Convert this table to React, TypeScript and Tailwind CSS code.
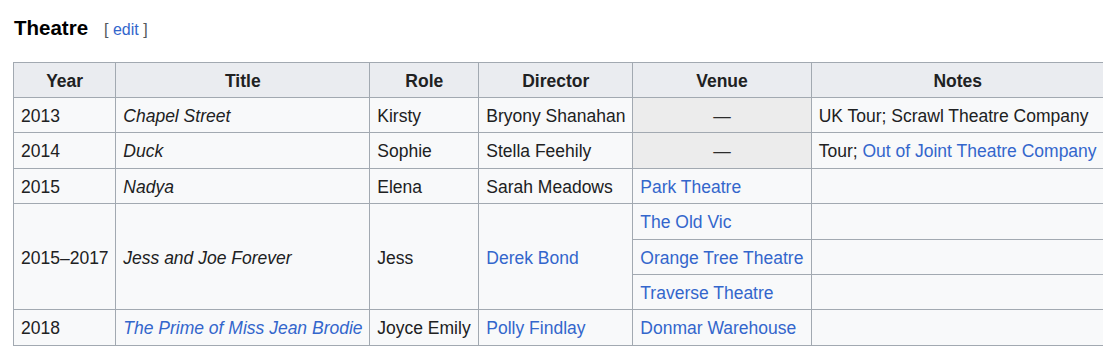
import React from 'react';

type Cell = {
  text?: React.ReactNode;
  italic?: boolean;
  link?: boolean;
  na?: boolean;
  rowSpan?: number;
};

const LINK = 'text-[#3366cc]';

const td = 'border border-[#a2a9b1] px-[7px] pt-[4px] pb-[2.4px] align-middle whitespace-nowrap';

const Row = ({ cells }: { cells: Cell[] }) => (
  <tr>
    {cells.map((c, i) =>
      c.na ? (
        <td key={i} className={`${td} bg-[#ececec] text-center text-[#2c2c2c]`}>
          —
        </td>
      ) : (
        <td key={i} rowSpan={c.rowSpan} className={`${td} text-left ${c.italic ? 'italic' : ''} ${c.link ? LINK : ''}`}>
          {c.text}
        </td>
      )
    )}
  </tr>
);

export default function App() {
  return (
    <div
      className="w-[1103px] h-[360px] overflow-hidden bg-white pl-[13px] text-[#202122]"
      style={{ fontFamily: '"Liberation Sans", Arial, sans-serif' }}
    >
      <div className="flex items-baseline pt-[14px] h-[62px]">
        <h3 className="text-[20.5px] font-bold text-black leading-[28px] ml-[1px]">Theatre</h3>
        <span className="ml-[16px] text-[16px] text-[#54595d]">
          [ <span className={LINK}>edit</span> ]
        </span>
      </div>

      <table className="table-fixed border-collapse bg-[#f8f9fa] text-[17.5px] leading-[28px] w-[1091px]">
        <colgroup>
          <col className="w-[102.3px]" />
          <col className="w-[254px]" />
          <col className="w-[109px]" />
          <col className="w-[154px]" />
          <col className="w-[178.4px]" />
          <col className="w-[293px]" />
        </colgroup>
        <thead>
          <tr className="bg-[#eaecf0]">
            {['Year', 'Title', 'Role', 'Director', 'Venue', 'Notes'].map((h) => (
              <th key={h} className="border border-[#a2a9b1] px-[7px] pt-[3.6px] pb-[2.4px] text-center font-bold">
                {h}
              </th>
            ))}
          </tr>
        </thead>
        <tbody>
          <Row
            cells={[
              { text: '2013' },
              { text: 'Chapel Street', italic: true },
              { text: 'Kirsty' },
              { text: 'Bryony Shanahan' },
              { na: true },
              { text: 'UK Tour; Scrawl Theatre Company' },
            ]}
          />
          <Row
            cells={[
              { text: '2014' },
              { text: 'Duck', italic: true },
              { text: 'Sophie' },
              { text: 'Stella Feehily' },
              { na: true },
              {
                text: (
                  <>
                    Tour; <span className={LINK}>Out of Joint Theatre Company</span>
                  </>
                ),
              },
            ]}
          />
          <Row
            cells={[
              { text: '2015' },
              { text: 'Nadya', italic: true },
              { text: 'Elena' },
              { text: 'Sarah Meadows' },
              { text: 'Park Theatre', link: true },
              { text: '' },
            ]}
          />
          <Row
            cells={[
              { text: '2015–2017', rowSpan: 3 },
              { text: 'Jess and Joe Forever', italic: true, rowSpan: 3 },
              { text: 'Jess', rowSpan: 3 },
              { text: 'Derek Bond', link: true, rowSpan: 3 },
              { text: 'The Old Vic', link: true },
              { text: '' },
            ]}
          />
          <Row cells={[{ text: 'Orange Tree Theatre', link: true }, { text: '' }]} />
          <Row cells={[{ text: 'Traverse Theatre', link: true }, { text: '' }]} />
          <Row
            cells={[
              { text: '2018' },
              { text: 'The Prime of Miss Jean Brodie', italic: true, link: true },
              { text: 'Joyce Emily' },
              { text: 'Polly Findlay', link: true },
              { text: 'Donmar Warehouse', link: true },
              { text: '' },
            ]}
          />
        </tbody>
      </table>
    </div>
  );
}
